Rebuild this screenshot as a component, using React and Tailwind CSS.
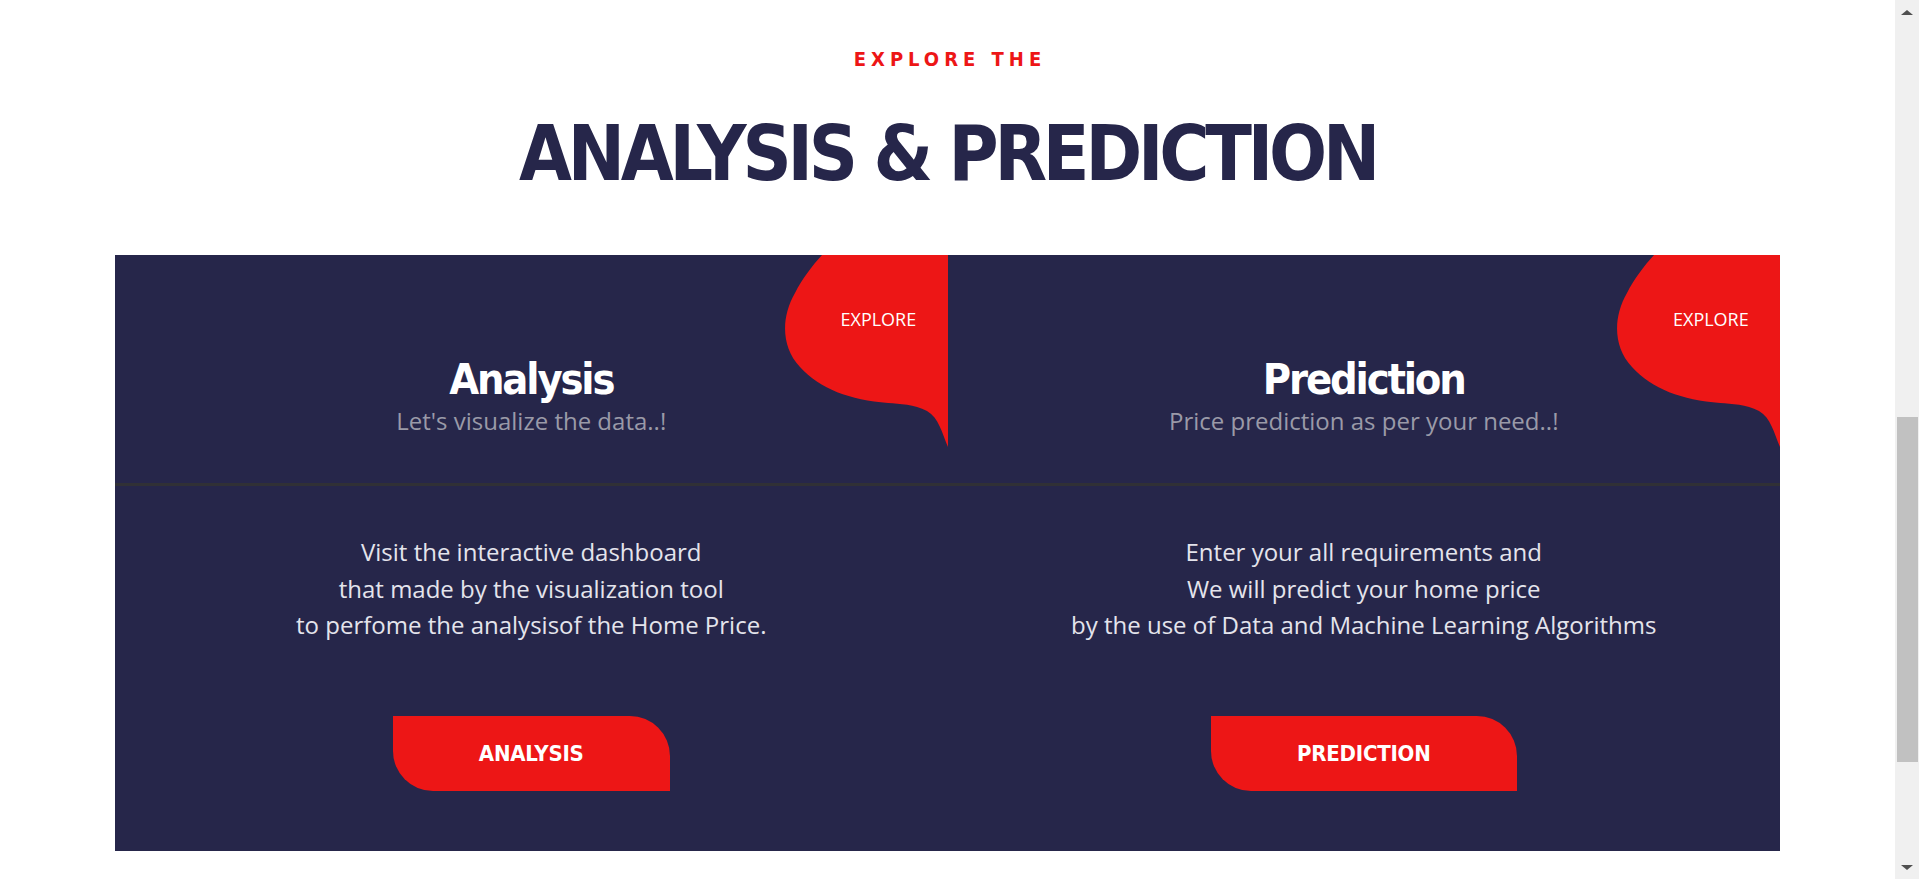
import React from "react";

const cards = [
    {
        title: "Analysis",
        subtitle: "Let's visualize the data..!",
        lines: [
            "Visit the interactive dashboard",
            "that made by the visualization tool",
            "to perfome the analysisof the Home Price.",
        ],
        button: "ANALYSIS",
    },
    {
        title: "Prediction",
        subtitle: "Price prediction as per your need..!",
        lines: [
            "Enter your all requirements and",
            "We will predict your home price",
            "by the use of Data and Machine Learning Algorithms",
        ],
        button: "PREDICTION",
    },
];

function ExploreBlob() {
    return (
        <div className="absolute top-0 right-0 w-[164px] h-[192px]">
            <svg width="164" height="192" viewBox="0 0 164 192" className="absolute inset-0">
                <path
                    d="M38 0 L164 0 L164 192 C158 178 155 163 143 156 C130 149 116 149 104 148 C66 145 36 134 16 112 C-3 92 -3 62 11 38 C18 24 28 11 38 0 Z"
                    fill="#ed1616"
                />
            </svg>
            <span className="absolute left-[57px] top-[55px] text-[18px] leading-none text-white font-['Open_Sans',sans-serif]">
                EXPLORE
            </span>
        </div>
    );
}

function Card({ data }) {
    return (
        <div className="flex-1 flex flex-col items-center">
            {/* cabecera */}
            <div className="relative w-full h-[228px] flex flex-col items-center pt-[103px]">
                <ExploreBlob />
                <h3 className="text-[43px] leading-none font-bold tracking-[-0.05em] text-white font-['DejaVu_Sans_Condensed','Roboto',sans-serif]">
                    {data.title}
                </h3>
                <p className="mt-[8px] text-[24px] leading-none text-[#9a9aa8] font-['Open_Sans',sans-serif]">
                    {data.subtitle}
                </p>
            </div>
        </div>
    );
}

function CardBody({ data }) {
    return (
        <div className="flex-1 flex flex-col items-center pt-[48px]">
            <div className="text-center text-[24px] leading-[36.5px] text-[#e4e4ec] font-['Open_Sans',sans-serif]">
                {data.lines.map((l, i) => (
                    <p key={i}>{l}</p>
                ))}
            </div>
            <button className="mt-[72px] h-[75px] px-[86px] bg-[#ed1616] text-white text-[22px] font-bold tracking-[-0.01em] rounded-tr-[40px] rounded-bl-[40px] font-['DejaVu_Sans_Condensed','Roboto',sans-serif]">
                {data.button}
            </button>
        </div>
    );
}

export default function App() {
    return (
        <div className="flex h-[879px] w-full bg-white overflow-hidden">
            <main className="flex-1 flex flex-col items-center">
                <p className="mt-[49px] text-[20px] leading-none font-bold tracking-[0.25em] pl-[0.25em] text-[#ed1616] font-['DejaVu_Sans_Condensed','Roboto',sans-serif]">
                    EXPLORE THE
                </p>
                <h2 className="mt-[47px] text-[76px] leading-none font-bold tracking-[-0.055em] text-[#26264a] font-['DejaVu_Sans_Condensed','Roboto',sans-serif]">
                    ANALYSIS &amp; PREDICTION
                </h2>

                <section className="mt-[63px] w-[1665px] bg-[#26264a]">
                    <div className="flex">
                        {cards.map((c, i) => (
                            <Card key={i} data={c} />
                        ))}
                    </div>
                    <div className="h-[3px] bg-[#303036]" />
                    <div className="flex h-[365px]">
                        {cards.map((c, i) => (
                            <CardBody key={i} data={c} />
                        ))}
                    </div>
                </section>
            </main>

            {/* barra de scroll */}
            <div className="w-[24px] bg-[#f0f0f0] flex flex-col items-center">
                <div className="h-[24px] flex items-center justify-center">
                    <div className="w-0 h-0 border-l-[6px] border-r-[6px] border-b-[5px] border-l-transparent border-r-transparent border-b-[#505050]" />
                </div>
                <div className="flex-1 w-full pl-[2px] pr-[1px]">
                    <div className="mt-[393px] h-[345px] bg-[#c1c1c1]" />
                </div>
                <div className="h-[24px] flex items-center justify-center">
                    <div className="w-0 h-0 border-l-[6px] border-r-[6px] border-t-[5px] border-l-transparent border-r-transparent border-t-[#505050]" />
                </div>
            </div>
        </div>
    );
}
